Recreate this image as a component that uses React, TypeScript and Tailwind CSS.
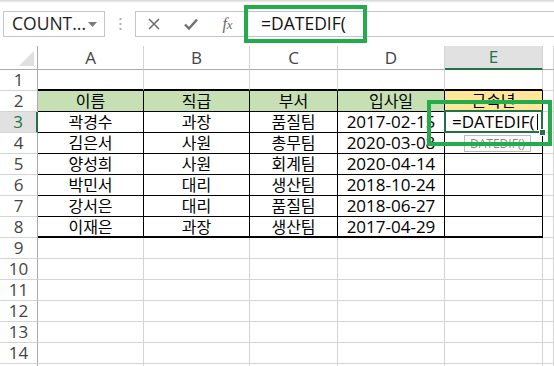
const cols = ["A", "B", "C", "D", "E", ""];

const table: string[][] = [
  ["이름", "직급", "부서", "입사일", "근속년"],
  ["곽경수", "과장", "품질팀", "2017-02-15", ""],
  ["김은서", "사원", "총무팀", "2020-03-08", ""],
  ["양성희", "사원", "회계팀", "2020-04-14", ""],
  ["박민서", "대리", "생산팀", "2018-10-24", ""],
  ["강서은", "대리", "품질팀", "2018-06-27", ""],
  ["이재은", "과장", "생산팀", "2017-04-29", ""],
];

const rows = Array.from({ length: 15 }, (_, i) => i + 1);

function cellClass(r: number, c: number) {
  // r: row number (1-based), c: column index 0..5
  const inTable = r >= 2 && r <= 8 && c <= 4;
  let cls = "h-[21px] border-r border-b flex items-center justify-center ";
  if (inTable) {
    cls += "border-r-black ";
    cls += r === 8 ? "border-b-2 border-b-black " : "border-b-black ";
  } else if (r === 1 && c <= 4) {
    cls += "border-r-[#d4d4d4] border-b-2 border-b-black ";
  } else {
    cls += "border-r-[#d4d4d4] border-b-[#d4d4d4] ";
  }
  if (r === 2 && c <= 3) cls += "bg-[#c6e0b4] ";
  if (r === 2 && c === 4) cls += "bg-[#ffe699] ";
  return cls;
}

function isHangul(s: string) {
  return /[\uac00-\ud7a3]/.test(s);
}

export default function App() {
  return (
    <div className="w-[554px] h-[366px] bg-white overflow-hidden relative font-['Open_Sans','Noto_Sans_CJK_KR',sans-serif] text-black">
      {/* Toolbar */}
      <div className="h-[46px]">
        <div className="h-[3px] bg-gradient-to-b from-[#d4d4d4] to-white" />
        <div className="flex items-center mt-[8px] h-[26px]">
          <div className="ml-[3px] w-[102px] h-[26px] border border-[#c6c6c6] flex items-center justify-between pl-[8px] pr-[7px]">
            <span className="text-[17.5px] leading-none text-[#222]">COUNT...</span>
            <svg width="9" height="5" viewBox="0 0 9 5">
              <path d="M0 0h9L4.5 5z" fill="#7a7a7a" />
            </svg>
          </div>
          <div className="w-[30px] flex justify-center">
            <svg width="3" height="12" viewBox="0 0 3 12">
              <rect x="0.5" y="0" width="2" height="2" fill="#b0b0b0" />
              <rect x="0.5" y="5" width="2" height="2" fill="#b0b0b0" />
              <rect x="0.5" y="10" width="2" height="2" fill="#b0b0b0" />
            </svg>
          </div>
          <div className="flex-1 h-[26px] border-y border-l border-[#c6c6c6] flex items-center">
            <div className="w-[109px] flex items-center">
              <div className="w-[36px] flex justify-center">
                <svg width="12" height="12" viewBox="0 0 12 12">
                  <path d="M1 1l10 10M11 1L1 11" stroke="#707070" strokeWidth="1.6" />
                </svg>
              </div>
              <div className="w-[38px] flex justify-center">
                <svg width="14" height="12" viewBox="0 0 14 12">
                  <path d="M1 6.5l4 4L13 1.5" stroke="#707070" strokeWidth="2.4" fill="none" />
                </svg>
              </div>
              <div className="w-[35px] flex justify-center">
                <span className="italic font-['Liberation_Serif',serif] text-[16px] leading-none text-[#6a6a6a]">
                  f<span className="text-[13px]">x</span>
                </span>
              </div>
            </div>
            <span className="pl-[16px] text-[17.5px] leading-none text-[#111]">=DATEDIF(</span>
          </div>
        </div>
      </div>

      {/* Sheet grid */}
      <div className="grid grid-cols-[38px_106px_106px_88px_107px_98px_1fr]">
        {/* Column headers */}
        <div className="h-[24px] border-r border-b border-[#ababab] relative">
          <svg className="absolute right-[3px] bottom-[3px]" width="15" height="15" viewBox="0 0 15 15">
            <path d="M15 0V15H0z" fill="#dfdfdf" />
          </svg>
        </div>
        {cols.map((c, i) =>
          c === "E" ? (
            <div
              key={i}
              className="h-[24px] bg-[#e1e1e1] border-r border-r-[#d4d4d4] border-b-2 border-b-[#217346] flex items-center justify-center text-[17px] text-[#217346]"
            >
              {c}
            </div>
          ) : (
            <div
              key={i}
              className="h-[24px] border-r border-r-[#d4d4d4] border-b border-b-[#ababab] flex items-center justify-center text-[17px] text-[#444]"
            >
              {c}
            </div>
          )
        )}

        {rows.map((r) => (
          <div key={r} className="contents">
            <div
              className={
                r === 3
                  ? "h-[21px] bg-[#e1e1e1] border-r-2 border-r-[#217346] border-b border-b-[#d4d4d4] flex items-center justify-center text-[17px] text-[#217346]"
                  : "h-[21px] border-r border-r-[#ababab] border-b border-b-[#d4d4d4] flex items-center justify-center text-[17px] text-[#444]"
              }
            >
              {r <= 14 ? r : ""}
            </div>
            {cols.map((_, c) => {
              const val = r >= 2 && r <= 8 && c <= 4 ? table[r - 2][c] : "";
              if (r === 3 && c === 4) {
                return (
                  <div key={c} className={cellClass(r, c) + "relative !justify-start"}>
                    <span className="pl-[7px] text-[17px] leading-[20px]">=DATEDIF(</span>
                    <span className="ml-[2px] w-px h-[16px] bg-black" />
                    <div className="absolute -left-px -top-[2px] -right-px -bottom-px border-2 border-[#217346]" />
                    <div className="absolute -right-[4px] -bottom-[4px] w-[7px] h-[7px] bg-[#217346] border border-white" />
                    <div className="absolute left-[19px] top-[23px] w-[67px] h-[17px] bg-white border border-[#bdbdbd] flex items-center justify-center text-[12px] leading-none text-[#8a8a8a] z-[5]">
                      DATEDIF()
                    </div>
                  </div>
                );
              }
              return (
                <div key={c} className={cellClass(r, c)}>
                  {val && (
                    <span className={isHangul(val) ? "text-[16px] leading-[20px]" : "text-[17px] leading-[20px]"}>
                      {val}
                    </span>
                  )}
                </div>
              );
            })}
          </div>
        ))}
      </div>

      {/* Annotation boxes */}
      <div className="absolute left-[244px] top-[5px] w-[123px] h-[38px] border-4 border-[#22ac4b] z-10" />
      <div className="absolute left-[427px] top-[100px] w-[125px] h-[46px] border-4 border-[#22ac4b] z-10" />
    </div>
  );
}
